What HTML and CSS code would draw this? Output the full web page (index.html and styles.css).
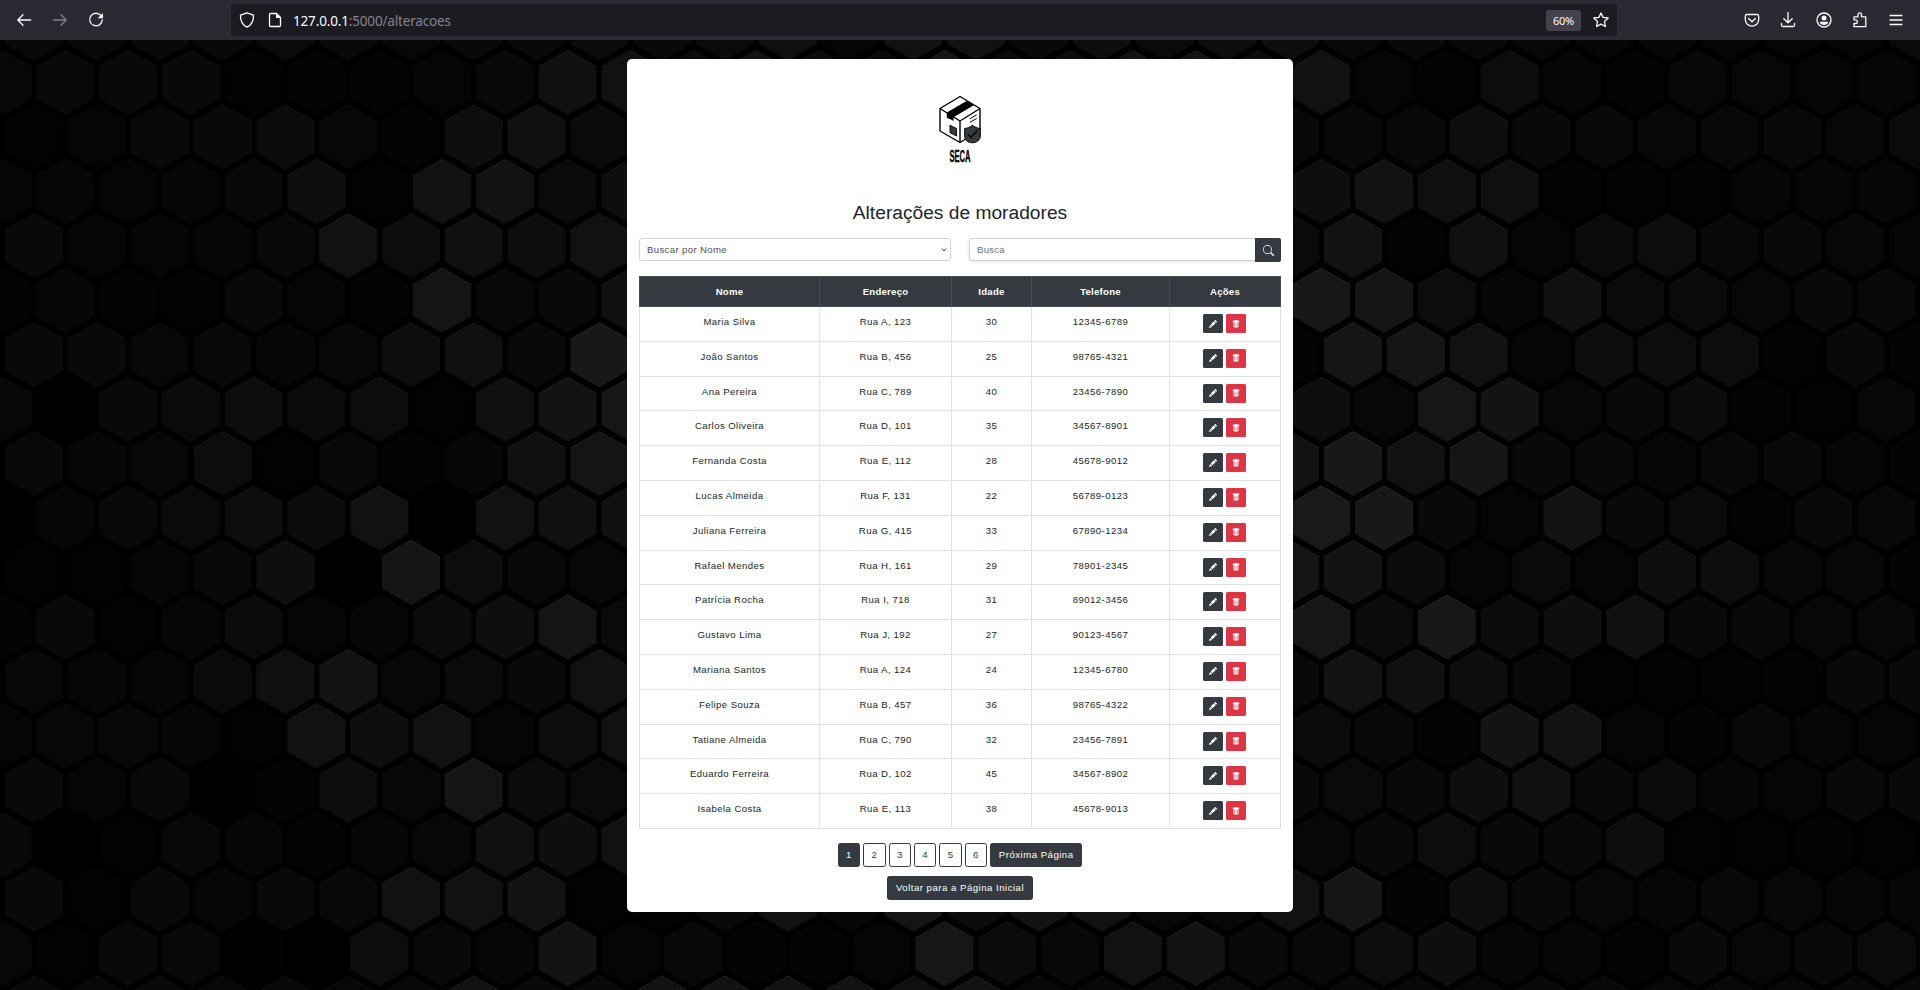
FILE: index.html
```html
<!DOCTYPE html>
<html lang="pt-BR">
<head>
<meta charset="utf-8">
<title>Alterações de moradores</title>
<link rel="stylesheet" href="styles.css">
</head>
<body>
<svg class="symbols" aria-hidden="true">
  <symbol id="pencil" viewBox="0 0 16 16"><path d="M12.854.146a.5.5 0 0 0-.707 0L10.500 1.793 14.207 5.500l1.647-1.646a.5.5 0 0 0 0-.708zm.646 6.061L9.793 2.500 3.293 9H3.500a.5.5 0 0 1 .5.5v.5h.5a.5.5 0 0 1 .5.5v.5h.5a.5.5 0 0 1 .5.5v.5h.5a.5.5 0 0 1 .5.5v.207zm-7.468 7.468A.5.5 0 0 1 6 13.500V13h-.5a.5.5 0 0 1-.5-.5V12h-.5a.5.5 0 0 1-.5-.5V11h-.5a.5.5 0 0 1-.5-.5V10h-.5a.5.5 0 0 1-.175-.032l-.179.178a.5.5 0 0 0-.11.168l-2 5a.5.5 0 0 0 .65.65l5-2a.5.5 0 0 0 .168-.11z"/></symbol>
  <symbol id="trash" viewBox="0 0 16 16"><path d="M2.500 1a1 1 0 0 0-1 1v1a1 1 0 0 0 1 1H3v9a2 2 0 0 0 2 2h6a2 2 0 0 0 2-2V4h.5a1 1 0 0 0 1-1V2a1 1 0 0 0-1-1H10a1 1 0 0 0-1-1H7a1 1 0 0 0-1 1zm3 4a.5.5 0 0 1 .5.5v7a.5.5 0 0 1-1 0v-7a.5.5 0 0 1 .5-.5M8 5a.5.5 0 0 1 .5.5v7a.5.5 0 0 1-1 0v-7A.5.5 0 0 1 8 5m3 .5v7a.5.5 0 0 1-1 0v-7a.5.5 0 0 1 1 0"/></symbol>
</svg>

<header class="toolbar">
  <div class="nav-buttons">
    <svg class="tool" viewBox="0 0 16 16"><path d="M14.700 8H2M7 2.800 1.800 8 7 13.200"/></svg>
    <svg class="tool disabled" viewBox="0 0 16 16"><path d="M1.300 8H14M9 2.800 14.200 8 9 13.200"/></svg>
    <svg class="tool" viewBox="0 0 16 16"><path d="M13 3.700A6.300 6.300 0 1 0 14.300 8"/><path class="solid" d="M15 1v5.300H9.700z"/></svg>
  </div>
  <div class="address">
    <svg class="tool" viewBox="0 0 16 16"><path d="M8 .9 14.500 3.200C14.700 9 12.500 13 8 15.200 3.500 13 1.300 9 1.500 3.200Z"/></svg>
    <svg class="tool" viewBox="0 0 16 16"><path d="M3.500 1.500H9.500L13.500 5.500V13.500a1 1 0 0 1-1 1h-9a1 1 0 0 1-1-1v-11a1 1 0 0 1 1-1z"/><path class="solid" d="M9 1.500V6h4.500z"/></svg>
    <span class="url">127.0.0.1<span class="path">:5000/alteracoes</span></span>
    <span class="zoom">60%</span>
    <svg class="tool" viewBox="0 0 16 16"><path d="M8 1 10.100 5.400 15.200 6 11.500 9.500 12.400 14.500 8 12.200 3.600 14.500 4.500 9.500.8 6 5.900 5.400Z"/></svg>
  </div>
  <div class="actions">
    <svg class="tool" viewBox="0 0 16 16"><path d="M3 2.500h10a1.700 1.700 0 0 1 1.700 1.700V7.500a6.700 6.700 0 0 1-13.400 0V4.200A1.700 1.700 0 0 1 3 2.500zM4.500 6.500 8 9.800 11.500 6.500"/></svg>
    <svg class="tool" viewBox="0 0 16 16"><path d="M8 .5V10.500M3.800 6.700 8 10.800 12.200 6.700M1.500 11.500V13a1.500 1.500 0 0 0 1.500 1.500H13a1.500 1.500 0 0 0 1.500-1.500V11.500"/></svg>
    <svg class="tool" viewBox="0 0 16 16"><circle cx="8" cy="8" r="7"/><circle class="solid" cx="8" cy="6" r="2.500"/><path class="solid" d="M3.800 9.700H12.200C12 14 4 14 3.800 9.700Z"/></svg>
    <svg class="tool" viewBox="0 0 16 16"><path d="M2 7V4.800h4V2.700a1.700 1.700 0 0 1 3.500 0V4.800H13.800V14.700H2V11.500H3.500a1.700 1.700 0 0 0 0-3.700H2z"/></svg>
    <svg class="tool" viewBox="0 0 16 16"><path d="M2 3.500H14M2 8H14M2 12.500H14"/></svg>
  </div>
</header>

<main class="page">
  <svg class="hexes" id="hexes" viewBox="0 40 1920 950" width="1920" height="950" aria-hidden="true"></svg>
  <section class="card">
    <svg class="logo" viewBox="0 0 100 100" role="img" aria-label="SECA">
      <g fill="#fff" stroke="#000" stroke-width="1.400" stroke-linejoin="round">
        <path d="M50 16.500 70 28.500V50L50 62.500 30 51V28.500Z"/>
        <path d="M30 28.500 50 41 70 28.500M50 41V62.500" fill="none"/>
      </g>
      <path d="M57 20.700 64.200 25 43.500 37.200V41L41 39.500 36.800 38V32.500Z"/>
      <path d="M60 38.700 66.700 34.800M60 42.300 66.700 38.400" stroke="#000" stroke-width="1"/>
      <path d="M40 45.200 46.500 48.500V56L40 52.700Z" fill="#343a40" stroke="#000" stroke-width=".9"/>
      <path d="M62.300 45.300C65 47.300 67.500 48.300 70.300 48.500V56C70.300 60 67 62.500 62.300 62.800 57.500 62.500 54.700 60 54.700 56V48.500C57.500 48.300 60 47.300 62.300 45.300Z" fill="#343a40" stroke="#000" stroke-width="1"/>
      <path d="M58 54.500 61 57.300 67.300 50.500" fill="none" stroke="#000" stroke-width="1.300"/>
      <text class="brand" transform="translate(50 81.500) scale(.45 1)">SECA</text>
    </svg>
    <h1 class="title">Alterações de moradores</h1>
    <div class="filters">
      <div class="select">Buscar por Nome
        <svg class="chevron" viewBox="0 0 6 6"><path d="M1 1.500 3 4 5 1.500"/></svg>
      </div>
      <div class="search">
        <div class="field">Busca</div>
        <button class="go" aria-label="Buscar"><svg viewBox="0 0 16 16"><path d="M11.742 10.344a6.500 6.500 0 1 0-1.397 1.398h-.001q.044.060.098.115l3.850 3.850a1 1 0 0 0 1.415-1.414l-3.850-3.850a1 1 0 0 0-.115-.1zM12 6.500a5.500 5.500 0 1 1-11 0 5.500 5.500 0 0 1 11 0"/></svg></button>
      </div>
    </div>
    <table class="residents">
      <colgroup><col class="c-name"><col class="c-address"><col class="c-age"><col class="c-phone"><col class="c-actions"></colgroup>
      <thead><tr><th>Nome</th><th>Endereço</th><th>Idade</th><th>Telefone</th><th>Ações</th></tr></thead>
      <tbody id="rows"></tbody>
    </table>
    <nav class="pages">
      <a class="btn active">1</a><a class="btn">2</a><a class="btn">3</a><a class="btn">4</a><a class="btn">5</a><a class="btn">6</a><a class="btn next">Próxima Página</a>
    </nav>
    <a class="btn home">Voltar para a Página Inicial</a>
  </section>
</main>
<script src="app.js"></script>
</body>
</html>
```
FILE: styles.css
```css
* { box-sizing: border-box; }
body { margin: 0; height: 990px; overflow: hidden; display: flex; flex-direction: column; background: #000; font-family: "Liberation Sans", Arial, sans-serif; font-size: 9.6px; color: #212529; }
.symbols { position: absolute; width: 0; height: 0; }

.toolbar { flex: none; height: 40px; display: flex; align-items: center; background: #2b2a33; font-family: "Noto Sans", "Open Sans", sans-serif; }
.tool { width: 16px; height: 16px; flex: none; fill: none; stroke: #fbfbfe; stroke-width: 1.3; stroke-linecap: round; stroke-linejoin: round; }
.tool .solid { fill: #fbfbfe; stroke: none; }
.disabled { opacity: .4; }
.nav-buttons { width: 231px; padding-left: 16px; display: flex; gap: 20px; }
.address { width: 1386px; height: 32px; border-radius: 4px; background: #1c1b22; display: flex; align-items: center; padding: 0 8px; }
.address .tool + .tool { margin-left: 12px; }
.url { margin-left: 10px; flex: 1; font-size: 13.500px; line-height: 20px; letter-spacing: -.16px; color: #fbfbfe; padding-top: 2px; }
.path { color: #85848d; }
.zoom { width: 35px; height: 21px; border-radius: 3px; background: #42414d; color: #fbfbfe; font-size: 11px; line-height: 21px; text-align: center; letter-spacing: -.3px; margin-right: 12px; }
.actions { margin-left: auto; padding-right: 16px; display: flex; gap: 20px; }

.page { position: relative; flex: 1; display: flex; justify-content: center; align-items: flex-start; padding-top: 19px; }
.hexes { position: absolute; top: 0; left: 0; }
.card { position: relative; width: 666px; height: 853px; background: #fff; border-radius: 5px; padding: 21px 12px 0; display: flex; flex-direction: column; align-items: center; }
.logo { width: 100px; height: 100px; flex: none; }
.brand { font: bold 17px "Liberation Sans", Arial, sans-serif; text-anchor: middle; stroke: #000; stroke-width: .4; }
.title { margin: 21px 0 0; font-size: 19.2px; font-weight: 400; line-height: 23px; }

.filters { width: 642px; margin-top: 14px; display: flex; gap: 18px; }
.select { width: 312px; height: 23px; border: 1px solid #ced4da; border-radius: 3px; padding: 0 3px 0 7px; display: flex; justify-content: space-between; align-items: center; color: #495057; letter-spacing: .36px; }
.chevron { width: 6px; height: 6px; fill: none; stroke: #495057; stroke-width: 1; }
.search { width: 312px; display: flex; }
.field { flex: 1; height: 23px; line-height: 21px; padding-left: 7px; border: 1px solid #ced4da; border-right: 0; border-radius: 3px 0 0 3px; color: #6c757d; letter-spacing: .25px; box-shadow: 0 1px 3px rgba(0, 0, 0, .12); }
.go { width: 26px; height: 24px; border: 0; border-radius: 0 2px 2px 0; padding: 0; display: flex; justify-content: center; align-items: center; background: #343a40; }
.go svg { width: 11px; height: 11px; fill: #fff; }

.residents { width: 642px; margin-top: 14px; border-collapse: collapse; table-layout: fixed; text-align: center; }
.c-name { width: 180px; }
.c-address { width: 132px; }
.c-age { width: 80px; }
.c-phone { width: 138px; }
.residents th { height: 30px; padding: 0; background: #343a40; border: 1px solid #454d55; color: #fff; font-weight: 700; letter-spacing: .25px; }
.residents td { height: 34.8px; padding: 8px 0 0; border: 1px solid #dee2e6; line-height: 14.4px; vertical-align: top; letter-spacing: .42px; }
.residents td.tools { padding: 7px 2px 0 0; }
.tool-group { display: flex; justify-content: center; gap: 3px; }
.icon-btn { width: 20px; height: 19px; border-radius: 1.500px; display: flex; align-items: center; justify-content: center; background: #343a40; }
.icon-btn.danger { background: #dc3545; }
.icon-btn svg { width: 8px; height: 8px; fill: #fff; }

.pages { margin-top: 14px; display: flex; gap: 3px; }
.btn { height: 24px; min-width: 22.4px; border: 1px solid #343a40; border-radius: 2.400px; line-height: 22px; text-align: center; color: #343a40; letter-spacing: .5px; }
.btn.active, .btn.next, .btn.home { background: #343a40; color: #fff; }
.btn.next { width: 92px; }
.btn.home { width: 146px; margin-top: 9px; }
```
FILE: app.js
```js
const residents = [
  ["Maria Silva", "Rua A, 123", 30, "12345-6789"],
  ["João Santos", "Rua B, 456", 25, "98765-4321"],
  ["Ana Pereira", "Rua C, 789", 40, "23456-7890"],
  ["Carlos Oliveira", "Rua D, 101", 35, "34567-8901"],
  ["Fernanda Costa", "Rua E, 112", 28, "45678-9012"],
  ["Lucas Almeida", "Rua F, 131", 22, "56789-0123"],
  ["Juliana Ferreira", "Rua G, 415", 33, "67890-1234"],
  ["Rafael Mendes", "Rua H, 161", 29, "78901-2345"],
  ["Patrícia Rocha", "Rua I, 718", 31, "89012-3456"],
  ["Gustavo Lima", "Rua J, 192", 27, "90123-4567"],
  ["Mariana Santos", "Rua A, 124", 24, "12345-6780"],
  ["Felipe Souza", "Rua B, 457", 36, "98765-4322"],
  ["Tatiane Almeida", "Rua C, 790", 32, "23456-7891"],
  ["Eduardo Ferreira", "Rua D, 102", 45, "34567-8902"],
  ["Isabela Costa", "Rua E, 113", 38, "45678-9013"]
];
const tools = '<td class="tools"><div class="tool-group"><span class="icon-btn"><svg><use href="#pencil"/></svg></span><span class="icon-btn danger"><svg><use href="#trash"/></svg></span></div></td>';
document.getElementById("rows").innerHTML = residents
  .map(r => "<tr>" + r.map(v => `<td>${v}</td>`).join("") + tools + "</tr>").join("");

// Brightness of each honeycomb cell, one base-36 digit per cell, row by row.
const levels = [
  "8899a8799a9af5hh9eade898766555a",
  "789934458ghahc9l9ciibh53c647756",
  "2589b74ega9999999999888d987887a",
  "56568e2hiae9999999999eiff333666",
  "95568hcfdh9999999999ai3f5ac8875",
  "3633854k89g9999999999nlc6gaa798",
  "997867df9o99999999994llh5dcc394",
  "719adac2gjm9999999999e7mj79b327",
  "867c2846gk9999999999iohl9968864",
  "168adbh1hgg9999999999po95j9a388",
  "2268e1lc879999999999kib5a5ed774",
  "4926a56beka9999999999mbnbeg9977",
  "766afi7a9h99999999998igd8233399",
  "57762heh5ch9999999999a84ji54865",
  "95814d7kba99999999999a9eg9a6599",
  "91286467geh999999999979c99d2232",
  "928688hhi338h6kbih77hl4d9768766",
  "728811c86j58445mb8hj98de664978a",
  "9898878h99iiiifi88aa898898787888"
];
const num = v => v.toFixed(1);
let out = "";
levels.forEach((row, i) => {
  const top = -4 + i * 54.45;
  [...row].forEach((ch, k) => {
    const x = (i % 2 ? 2.5 : 34.2) + 62.8 * k;
    const g = parseInt(ch, 36);
    const pts = [[0, 0], [29, 16.5], [29, 48], [0, 64.5], [-29, 48], [-29, 16.5]]
      .map(([dx, dy]) => num(x + dx) + "," + num(top + dy));
    const edge = Math.round(g * 1.55 + 2);
    out += `<polygon points="${pts.join(" ")}" fill="rgb(${g},${g},${g + (g > 5 ? 1 : 0)})"/>`;
    out += `<polyline points="${[pts[5], pts[0], pts[1]].join(" ")}" fill="none" stroke="rgb(${edge},${edge},${edge})"/>`;
  });
});
document.getElementById("hexes").innerHTML = out;
```
